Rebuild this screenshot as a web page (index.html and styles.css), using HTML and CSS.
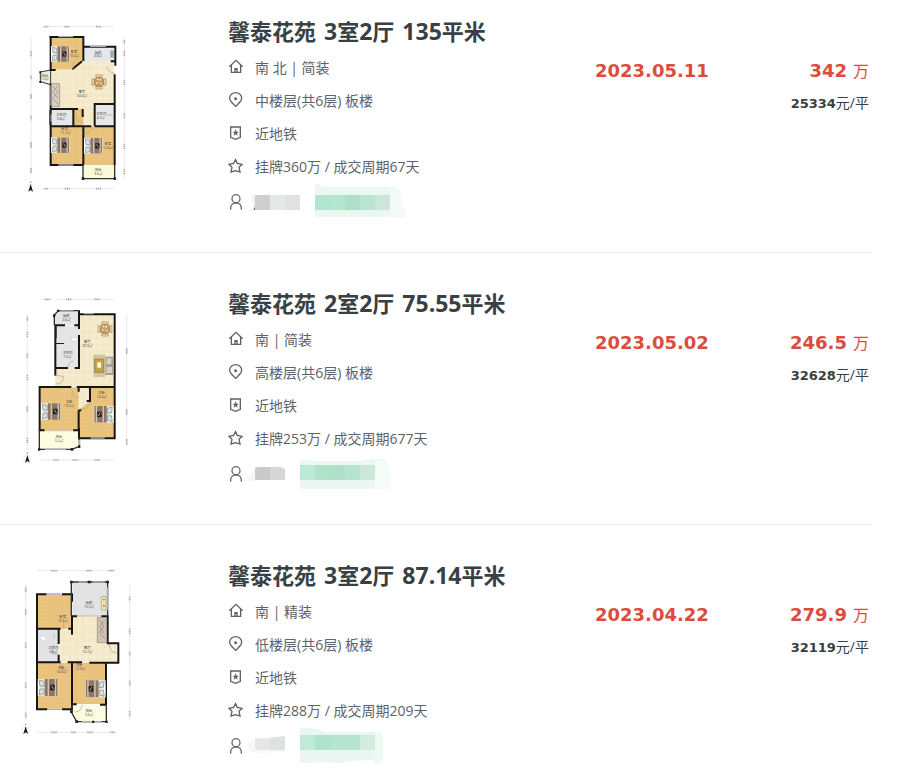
FILE: index.html
```html
<!DOCTYPE html>
<html lang="zh-CN">
<head>
<meta charset="utf-8">
<meta name="viewport" content="width=device-width, initial-scale=1">
<title>馨泰花苑</title>
<link rel="stylesheet" href="styles.css">
</head>
<body>
<svg class="defs" aria-hidden="true">
  <defs>
    <pattern id="wood" width="60" height="12" patternUnits="userSpaceOnUse"><rect width="60" height="12" fill="#eac47e"/><path d="M0 11.500H60M18 0V11" stroke="#e2b76e" stroke-width="1"/></pattern>
    <pattern id="tile" width="20" height="20" patternUnits="userSpaceOnUse"><rect width="20" height="20" fill="#f3e8c6"/><path d="M0 10L10 0L20 10L10 20Z" fill="#f6edd0"/></pattern>
  </defs>
  <symbol id="bed" viewBox="0 0 60 50">
    <rect width="58" height="50" fill="#efe3d2"/><path d="M2 2V48" stroke="#fff" stroke-width="5"/>
    <path d="M4 4L18 8V22L6 20ZM4 46L18 42V29L6 30Z" fill="#d9e2e2" stroke="#6f8d96" stroke-width="2"/>
    <path d="M20 1H56V49H20Z" fill="#8a7767"/><path d="M30 1V49M50 1V49" stroke="#d6c5ae" stroke-width="4"/>
    <rect x="35" y="17" width="13" height="16" fill="#251f1b"/><path d="M39 20L45 30" stroke="#eee" stroke-width="2"/>
  </symbol>
  <symbol id="dining" viewBox="0 0 48 48">
    <path d="M14 2H34V10H14ZM14 38H34V46H14ZM2 14H10V34H2ZM38 14H46V34H38Z" fill="#e8d5b4" stroke="#98835f" stroke-width="2"/>
    <circle cx="24" cy="24" r="15" fill="#d5974d" stroke="#a8763c" stroke-width="2"/><circle cx="24" cy="24" r="5" fill="#98b6ae"/>
    <path d="M18 14L22 18M30 14L27 19M15 28L19 26M32 31L29 28" stroke="#fff" stroke-width="4"/>
  </symbol>
  <symbol id="north" viewBox="0 0 26 34"><circle cx="13" cy="20" r="11" fill="none" stroke="#ccc"/><path d="M13 8L20 31L13 26L6 31Z" fill="#151515"/><path d="M11 0H15V4H11Z" fill="#888"/></symbol>
  <symbol id="i-home" viewBox="0 0 48 51"><path d="M4 23L24 4L44 23M10 19V40H38V19" fill="none" stroke="#5d6368" stroke-width="4"/><path d="M19 27H29V42H25V32H23V42H19Z" fill="#5d6368"/></symbol>
  <symbol id="i-pin" viewBox="0 0 48 51"><path d="M23 43C15 35 5 28 5 19A18 17 0 0 1 41 19C41 28 31 35 23 43Z" fill="none" stroke="#5d6368" stroke-width="4"/><circle cx="23" cy="20" r="4.500" fill="#5d6368"/></symbol>
  <symbol id="i-badge" viewBox="0 0 48 51"><path d="M8 6H37V37L23 43L8 37Z" fill="none" stroke="#5d6368" stroke-width="4"/><path d="M23 13L26 20L32 21L27 25L29 32L23 28L17 32L19 25L14 21L20 20Z" fill="#5d6368"/></symbol>
  <symbol id="i-star" viewBox="0 0 48 51"><path d="M22.500 5L28 16L42 19L33 28L36 42L22.500 38L9 42L12 28L3 19L17 16Z" fill="none" stroke="#5d6368" stroke-width="4"/></symbol>
  <symbol id="i-user" viewBox="0 0 48 51"><circle cx="24" cy="14" r="12" fill="none" stroke="#666b70" stroke-width="4"/><path d="M8 47V42C8 22 40 22 40 42V47" fill="none" stroke="#666b70" stroke-width="4"/></symbol>
</svg>

<ul class="deals">
  <li class="deal">
    <a class="plan" href="#" aria-label="户型图 3室2厅">
      <svg viewBox="0 0 390 555">
        <path d="M94 35H312M63 68V480M343 68V490M94 521H312" class="dim"/>
        <path d="M102 35H115M163 35H178M258 35H273M103 521H115M164 521H180M258 521H273M63 108V124M63 182V194M63 238V252M63 302V316M63 382V398M63 460V474M343 75V88M343 107V124M343 194V210M343 294V309M343 386V402M343 462V478" class="mark"/>
        <path d="M124 139H312V330H124Z" fill="url(#tile)"/>
        <path d="M122 66H218V139L192 163H122ZM122 334H220V450H122ZM220 334H314V450H220ZM190 282H220V334H190Z" fill="url(#wood)"/>
        <path d="M220 95H314V139H220ZM122 284H188V332H122ZM254 267H314V333H254Z" fill="#e6e7e9"/>
        <path d="M220 450H314V491H220Z" fill="#fbfbdc"/><path d="M91 171L122 165V209L91 200Z" fill="#eef0df" stroke="#333" stroke-width="3"/>
        <path d="M122 63V165H137M118 66H220V138M187 163L216 139M220 95H316V152M302 139H316M314 178V450M122 205V450H220M122 334H244M220 334V450M190 284V334M122 282H204M218 282V306M254 333V267H314M254 334H316" class="wall"/>
        <path d="M219 450V491H314V450M120 284V330" fill="none" stroke="#333" stroke-width="4"/>
        <path d="M145 65H190M240 94H288M145 450H190M120 212V270M124 298V320" class="window"/>
        <path d="M88 169H94V175H88ZM88 198H94V204H88ZM215 487H223V495H215ZM311 487H318V495H311Z" fill="#222"/>
        <path d="M190 140V163M290 155Q294 173 314 175M198 300Q200 320 218 322M244 336Q242 354 224 356M290 300H308" class="door"/>
        <use href="#bed" x="123" y="93" width="58" height="48"/><use href="#bed" x="123" y="366" width="58" height="49"/><use href="#bed" x="222" y="368" width="58" height="49"/>
        <use href="#dining" x="243" y="178" width="48" height="46"/>
        <path d="M124 206H149V274H124Z" fill="#d9d0c4" stroke="#8f8174" stroke-width="2"/><path d="M127 212L144 230L128 250L145 268M144 212L128 230L145 250" stroke="#8f8174" fill="none" stroke-width="2"/>
        <path d="M301 106H311V128H301Z" fill="#8eabc0"/>
        <g class="room"><text x="192" y="114">卧室</text><text x="192" y="125">10.2㎡</text><text x="264" y="116">厨房</text><text x="264" y="127">4.8㎡</text><text x="216" y="235">客厅</text><text x="216" y="246">34.4㎡</text><text x="104" y="185">阳台</text><text x="104" y="195">1.2㎡</text><text x="154" y="304">卫生间</text><text x="152" y="315">3.8㎡</text><text x="274" y="300">卫生间</text><text x="272" y="311">4.7㎡</text><text x="164" y="346">卧室</text><text x="166" y="357">11.7㎡</text><text x="294" y="390">卧室</text><text x="294" y="401">12.6㎡</text><text x="265" y="468">阳台</text><text x="265" y="479">3.6㎡</text></g>
        <use href="#north" x="49" y="499" width="26" height="34"/>
      </svg>
    </a>
    <div class="info">
      <h2><a href="#"><span>馨泰花苑</span> <span><b>3</b>室<b>2</b>厅</span> <span><b>135</b>平米</span></a></h2>
      <p class="row"><svg class="icon"><use href="#i-home"/></svg>南 北 | 简装</p>
      <p class="row"><svg class="icon"><use href="#i-pin"/></svg>中楼层(共6层) 板楼</p>
      <p class="row"><svg class="icon"><use href="#i-badge"/></svg>近地铁</p>
      <p class="row"><svg class="icon"><use href="#i-star"/></svg>挂牌360万 / 成交周期67天</p>
      <div class="row agent"><svg class="icon"><use href="#i-user"/></svg>
        <svg class="mosaic" viewBox="96 207 480 108">
          <path d="M111 240H120V285H116L113 264Z" fill="#f1f1f0"/><path d="M115 284L120 276V285Z" fill="#666"/>
          <path d="M120 240H165V285H120Z" fill="#d1cfce"/><path d="M165 240H210V285H165Z" fill="#e6e7e9"/><path d="M210 240H255V285H210Z" fill="#e0e2e2"/>
          <path d="M300 207H315L319 216H545L555 225L557 252L563 278H569V309H545L525 306H300Z" fill="#ebf7f1"/><path d="M525 219H552L557 252L563 278H569V309H525Z" fill="#f3faf7"/>
          <path d="M300 240H345V285H300Z" fill="#b3e6d0"/><path d="M345 240H390V285H345Z" fill="#b5e6cf"/><path d="M390 240H435V285H390Z" fill="#aedfc8"/><path d="M435 240H480V285H435Z" fill="#bae5d4"/><path d="M480 240H525V285H480Z" fill="#cce7d9"/>
        </svg>
      </div>
    </div>
    <time class="date" datetime="2023-05-11">2023.05.11</time>
    <div class="cost"><p class="total"><strong>342</strong>万</p><p class="unit"><strong>25334</strong>元/平</p></div>
  </li>

  <li class="deal">
    <a class="plan" href="#" aria-label="户型图 2室2厅">
      <svg viewBox="0 6 390 555">
        <path d="M90 43H130M143 43H312M52 88V495M350 88V480M90 525H312" class="dim"/>
        <path d="M104 43H120M168 43H184M253 43H270M130 525H146M187 525H203M253 525H269M52 97V108M52 140V156M52 204V219M52 270V286M52 364V380M52 458V474M350 190V207M350 373V389M350 463V479" class="mark"/>
        <path d="M207 86H314V304H136V249H207Z" fill="url(#tile)"/>
        <path d="M91 307H206V436H91ZM206 307H314V458H207Z" fill="url(#wood)"/><path d="M206 307H240V348L206 374Z" fill="url(#tile)"/>
        <path d="M135 90L145 77H207V121H135ZM136 123H207V249H136Z" fill="#e3e5e7"/><path d="M90 436H206V483L186 492H90Z" fill="#fcfce0"/>
        <path d="M207 76V132M207 88H317M314 88V460H207V430M207 150V249H194M135 121H165M193 121H207M136 120V249H174M136 247V272M86 306H184M200 306H314M89 304V436H104M189 436H206V376M206 305V320M206 376H214M240 305V348H230" class="wall"/>
        <path d="M133 120V90L145 77H207M88 436V493H186L208 484V458" fill="none" stroke="#333" stroke-width="4"/>
        <path d="M221 86H251M242 459H284M149 78H190M105 493H168M209 465V480" class="window"/>
        <path d="M129 88H136V96H129ZM141 74H148V81H141ZM84 490H91V497H84ZM182 489H190V497H182ZM204 481H211V489H204ZM136 174H162V177H136ZM136 122H140V160H136Z" fill="#222"/><path d="M184 158H202V168H184Z" fill="#fff" stroke="#aaa"/>
        <path d="M136 297Q160 298 160 274L136 271M190 228Q174 230 174 248M188 316Q180 335 206 338M240 351Q238 370 212 373M105 437H186" class="door"/>
        <use href="#bed" x="93" y="353" width="62" height="53"/><use href="#bed" x="-311" y="360" width="62" height="56" transform="scale(-1 1)"/>
        <use href="#dining" x="262" y="106" width="46" height="52"/>
        <path d="M250 209H286V276H250Z" fill="#d6c2a5"/><path d="M254 222H281V262H254Z" fill="#c6a443" stroke="#8d7140" stroke-width="2"/><path d="M262 232H273V248H262Z" fill="#fff"/><path d="M286 215H312V270H286Z" fill="#aaa092"/><path d="M290 220H304V238H290ZM290 246H306V264H290Z" fill="#d9d0c6"/>
        <g class="room"><text x="169" y="97">厨房</text><text x="169" y="109">2.6㎡</text><text x="173" y="208">卫生间</text><text x="172" y="220">7.0㎡</text><text x="232" y="175">客厅</text><text x="232" y="187">26.9㎡</text><text x="178" y="353">主卧</text><text x="178" y="365">13.5㎡</text><text x="275" y="327">次卧</text><text x="275" y="339">13.4㎡</text><text x="147" y="459">阳台</text><text x="147" y="471">5.2㎡</text></g>
        <use href="#north" x="39" y="502" width="26" height="34"/>
      </svg>
    </a>
    <div class="info">
      <h2><a href="#"><span>馨泰花苑</span> <span><b>2</b>室<b>2</b>厅</span> <span><b>75.55</b>平米</span></a></h2>
      <p class="row"><svg class="icon"><use href="#i-home"/></svg>南 | 简装</p>
      <p class="row"><svg class="icon"><use href="#i-pin"/></svg>高楼层(共6层) 板楼</p>
      <p class="row"><svg class="icon"><use href="#i-badge"/></svg>近地铁</p>
      <p class="row"><svg class="icon"><use href="#i-star"/></svg>挂牌253万 / 成交周期677天</p>
      <div class="row agent"><svg class="icon"><use href="#i-user"/></svg>
        <svg class="mosaic" viewBox="96 48 480 108">
          <path d="M96 118L120 85V123H104Z" fill="#f5f5f5"/><path d="M120 84L128 81H165V120H120Z" fill="#cacaca"/><path d="M165 81H198L210 87V120H165Z" fill="#d6d6d8"/>
          <path d="M255 57H268L276 62H445L455 58H508L518 65L525 122V147H258L255 144Z" fill="#ecf7f2"/><path d="M480 62H516L525 122V147H480Z" fill="#f4fbf8"/>
          <path d="M255 75H300V120H255Z" fill="#bdead6"/><path d="M300 75H345V120H300Z" fill="#afe2cb"/><path d="M345 75H390V120H345Z" fill="#b0dfca"/><path d="M390 75H435V120H390Z" fill="#b6e4d0"/><path d="M435 75H480V120H435Z" fill="#cce8da"/>
        </svg>
      </div>
    </div>
    <time class="date" datetime="2023-05-02">2023.05.02</time>
    <div class="cost"><p class="total"><strong>246.5</strong>万</p><p class="unit"><strong>32628</strong>元/平</p></div>
  </li>

  <li class="deal">
    <a class="plan" href="#" aria-label="户型图 3室2厅">
      <svg viewBox="0 -3 390 555">
        <path d="M82 32H318M47 72V480M359 72V480M82 517H318" class="dim"/>
        <path d="M124 32H142M229 32H246M296 32H314M124 517H140M184 517H198M232 517H250M300 517H314M47 82V97M47 148V164M47 248V264M47 368V384M47 458V474M359 110V124M359 206V222M359 275V289M359 362V378M359 453V469" class="mark"/>
        <path d="M148 169H292V250H320V306H148Z" fill="url(#tile)"/><path d="M82 105H184V206H82ZM82 308H186V446H82ZM186 308H288V432H186Z" fill="url(#wood)"/>
        <path d="M187 69H292V169H187ZM82 207H146V306H82Z" fill="#e1e3e5"/><path d="M187 434H288V484H200L187 460Z" fill="#fcfce0"/>
        <path d="M78 103H110M156 103H186V125M81 102V448H112M156 448H186V308M186 168V224M186 169H201M274 169H293V250H328M325 250V308H238M78 206H152M175 206H186M146 207V252M146 284V306M78 307H152M173 307H216M288 306V434H270M186 433H200" class="wall"/>
        <path d="M184 168V66H293V168M186 432V460L200 485H289V433" fill="none" stroke="#333" stroke-width="4"/>
        <path d="M110 102H154M112 448H155M205 66H230M248 66H284M215 485H275M292 82V150" class="window"/>
        <path d="M180 62H188V70H180ZM234 62H242V70H234ZM289 62H297V70H289ZM180 451H188V459H180ZM196 481H204V489H196ZM246 482H253V489H246ZM286 482H293V489H286Z" fill="#222"/>
        <path d="M161 183V206M200 168H274M298 255Q300 278 320 278M132 220V232M133 255Q118 275 128 282H146M153 309V326Q165 330 176 332M216 434Q216 455 194 456" class="door"/>
        <path d="M85 230H107V242H94V236H85Z" fill="#fff" stroke="#aaa"/>
        <use href="#bed" x="83" y="356" width="64" height="53"/><use href="#bed" x="-287" y="360" width="64" height="53" transform="scale(-1 1)"/>
        <path d="M274 110H288V150H274Z" fill="#ede6b0" stroke="#aaa06d" stroke-width="2"/><path d="M279 119H284M279 138H284" stroke="#9a793b" stroke-width="4"/>
        <path d="M262 173H290V248H262Z" fill="#d0c3b5" stroke="#918579" stroke-width="2"/><path d="M268 181L282 198L268 216L284 236M284 182L269 199L282 220" stroke="#8e8174" fill="none" stroke-width="2"/>
        <g class="room"><text x="237" y="133">厨房</text><text x="237" y="144">10.0㎡</text><text x="158" y="173">卧室</text><text x="158" y="185">10.5㎡</text><text x="130" y="267">卫生间</text><text x="130" y="279">5.8㎡</text><text x="232" y="268">客厅</text><text x="232" y="280">13.7㎡</text><text x="154" y="327">主卧</text><text x="154" y="339">14.3㎡</text><text x="208" y="318">次卧</text><text x="211" y="330">12.9㎡</text><text x="237" y="455">阳台</text><text x="237" y="467">3.6㎡</text></g>
        <use href="#north" x="34" y="491" width="26" height="34"/>
      </svg>
    </a>
    <div class="info">
      <h2><a href="#"><span>馨泰花苑</span> <span><b>3</b>室<b>2</b>厅</span> <span><b>87.14</b>平米</span></a></h2>
      <p class="row"><svg class="icon"><use href="#i-home"/></svg>南 | 精装</p>
      <p class="row"><svg class="icon"><use href="#i-pin"/></svg>低楼层(共6层) 板楼</p>
      <p class="row"><svg class="icon"><use href="#i-badge"/></svg>近地铁</p>
      <p class="row"><svg class="icon"><use href="#i-star"/></svg>挂牌288万 / 成交周期209天</p>
      <div class="row agent"><svg class="icon"><use href="#i-user"/></svg>
        <svg class="mosaic" viewBox="96 114 480 108">
          <path d="M120 144Q98 148 98 166Q100 187 120 188H160L210 184V140Z" fill="#f8f8f8"/><path d="M120 145H165V180H120Z" fill="#e6e6e6"/><path d="M165 143L210 138V180H165Z" fill="#dfe0e2"/>
          <path d="M255 111L305 117L335 127H495L503 133V218L480 222L472 211L400 212L372 219L345 217L255 218Z" fill="#eaf7f1"/><path d="M480 127H495L503 133V218L480 222Z" fill="#f0faf5"/>
          <path d="M255 135H300V180H255Z" fill="#bfead8"/><path d="M300 135H345V180H300Z" fill="#afe3cb"/><path d="M345 135H390V180H345Z" fill="#b5e4cf"/><path d="M390 135H435V180H390Z" fill="#b6e4d1"/><path d="M435 135H480V180H435Z" fill="#d2ecdf"/>
        </svg>
      </div>
    </div>
    <time class="date" datetime="2023-04-22">2023.04.22</time>
    <div class="cost"><p class="total"><strong>279.9</strong>万</p><p class="unit"><strong>32119</strong>元/平</p></div>
  </li>
</ul>
</body>
</html>
```
FILE: styles.css
```css
* {
  box-sizing: border-box;
}

body {
  margin: 0;
  background: #fff;
  color: #5d6368;
  font: 14px/33px "Open Sans", "Noto Sans CJK SC", sans-serif;
}

h2,
p,
ul {
  margin: 0;
  padding: 0;
}

a {
  color: inherit;
  text-decoration: none;
}

.defs {
  position: absolute;
  width: 0;
  height: 0;
}

.deals {
  margin-right: 32px;
  list-style: none;
}

.deal {
  display: grid;
  grid-template-columns: 228px minmax(0, 1fr) 160px 114px;
  align-items: start;
  padding: 34px 3px 30px 0;
  border-bottom: 1px solid #ebebeb;
}

.deal:first-child {
  padding-top: 15px;
}

.deal:last-child {
  padding-bottom: 0;
  border-bottom: 0;
}

.plan {
  display: block;
  padding-left: 10px;
}

.plan svg {
  display: block;
  width: 130px;
  height: 185px;
}

.dim {
  fill: none;
  stroke: #dedede;
  stroke-width: 2;
}

.mark {
  fill: none;
  stroke: #aaa;
  stroke-width: 5;
  stroke-dasharray: 4 2;
}

.wall {
  fill: none;
  stroke: #171513;
  stroke-width: 6;
}

.window {
  fill: none;
  stroke: #a9adae;
  stroke-width: 4;
}

.door {
  fill: none;
  stroke: #aaa28f;
  stroke-width: 2;
}

.room {
  fill: #4c4135;
  font-size: 10px;
  text-anchor: middle;
}

.info {
  padding-top: 1px;
}

.info h2 {
  margin-bottom: 5px;
  color: #394043;
  font-size: 22px;
  line-height: 30px;
}

.info h2 a {
  display: flex;
  gap: 8px;
  height: 30px;
}

.info h2 b {
  font-size: 23px;
  font-weight: 700;
}

.row {
  display: flex;
  align-items: center;
  gap: 11px;
  height: 33px;
}

.icon {
  flex: none;
  width: 16px;
  height: 17px;
}

.agent {
  align-items: flex-start;
  gap: 3px;
  height: 39px;
  padding-top: 1px;
}

.agent .icon {
  margin-top: 10px;
}

.mosaic {
  width: 160px;
  height: 36px;
}

.date,
.total {
  margin-top: 42px;
  color: #db4c3f;
  line-height: 28px;
}

.date,
.total strong {
  font-family: "DejaVu Sans", "Noto Sans CJK SC", sans-serif;
  font-size: 18px;
  font-weight: 700;
}

.cost {
  text-align: right;
}

.total {
  font-size: 16px;
}

.total strong {
  margin-right: 6px;
}

.unit {
  margin-top: 6px;
  color: #394043;
  line-height: 24px;
}

.unit strong {
  font-family: "DejaVu Sans", "Noto Sans CJK SC", sans-serif;
  font-size: 13px;
}
```
